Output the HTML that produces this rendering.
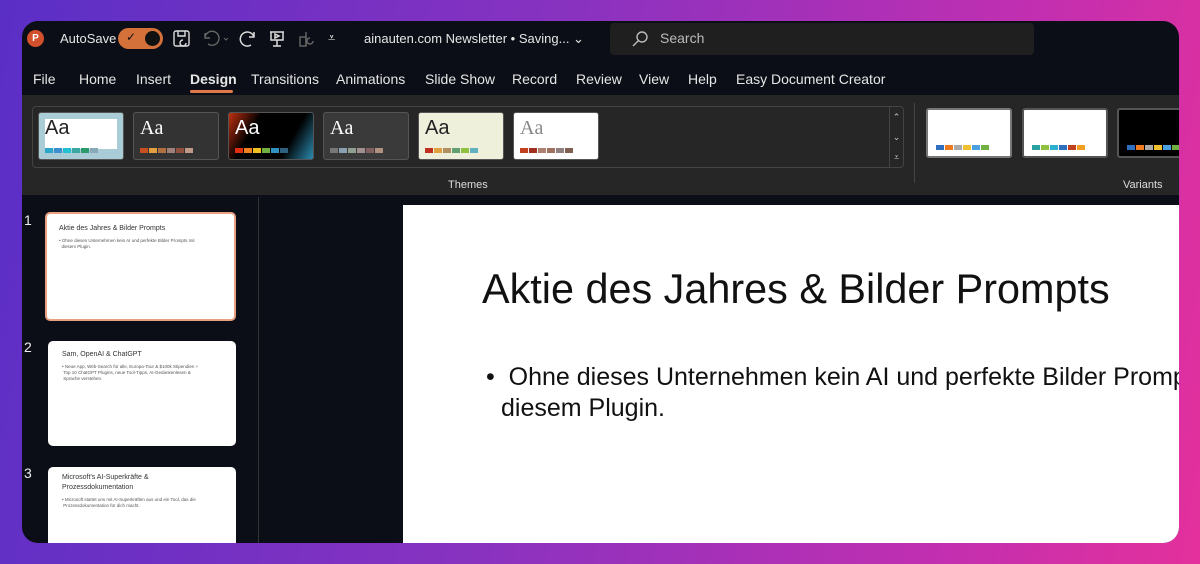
<!DOCTYPE html>
<html><head><meta charset="utf-8"><style>
*{margin:0;padding:0;box-sizing:border-box}
body{width:1200px;height:564px;overflow:hidden;font-family:"Liberation Sans",sans-serif;background:linear-gradient(100deg,#5a2fc6 0%,#8a32c0 45%,#c22fb0 80%,#e4309c 100%);position:relative}
.win{position:absolute;left:22px;top:21px;width:1157px;height:522px;border-radius:16px;overflow:hidden;background:#0b0e16}
.t{position:absolute;color:#e6e6e6;font-size:14px;white-space:nowrap}
.tab{position:absolute;top:50px;color:#e6e6e6;font-size:14px}
.ribbon{position:absolute;left:0;top:74px;width:1157px;height:100px;background:#262626}
.gal{position:absolute;left:10px;top:11px;width:872px;height:62px;border:1px solid #444;border-radius:4px;background:#262626}
.th{position:absolute;top:5px;width:86px;height:48px;border:1px solid #555;border-radius:3px;overflow:hidden}
.th span.aa{position:absolute;left:6px;top:4px;font-size:20px;color:#fff;font-family:"Liberation Serif",serif}
.sw{position:absolute;left:6px;bottom:6px;display:flex;gap:1px}
.sw i{display:block;width:8px;height:5px}
.var{position:absolute;top:13px;width:86px;height:50px;border:2px solid #555;border-radius:3px;background:#fff}
.thumb{position:absolute;left:26px;width:188px;background:#fff;border-radius:5px}
.num{position:absolute;left:2px;color:#eee;font-size:14px}
</style></head><body>
<div class="win">
 <div style="position:absolute;left:5px;top:9px;width:17px;height:17px;border-radius:50%;background:#d2502c;color:#fff;font-size:10px;font-weight:bold;text-align:center;line-height:17px">P</div>
 <div class="t" style="left:38px;top:10px;font-size:13px">AutoSave</div>
 <div style="position:absolute;left:96px;top:7px;width:45px;height:21px;border-radius:11px;background:#d4703a"><span style="position:absolute;left:8px;top:2px;color:#111;font-size:12px">✓</span><div style="position:absolute;right:3px;top:3px;width:15px;height:15px;border-radius:50%;background:#111"></div></div>
 <svg style="position:absolute;left:150px;top:8px" width="20" height="20" viewBox="0 0 20 20" fill="none" stroke="#ddd" stroke-width="1.4"><rect x="2" y="2" width="15" height="15" rx="2"/><path d="M6 2v5h7V2M11 11a3 3 0 1 0 3 3"/></svg>
 <svg style="position:absolute;left:180px;top:8px" width="30" height="20" viewBox="0 0 30 20" fill="none" stroke="#666" stroke-width="1.4"><path d="M3 4v5h5M3 9a7 7 0 1 1 3 6"/><path d="M22 9l2 2 2-2" stroke-width="1"/></svg>
 <svg style="position:absolute;left:216px;top:8px" width="20" height="20" viewBox="0 0 20 20" fill="none" stroke="#ddd" stroke-width="1.5"><path d="M16 3v5h-5M16 8a7 7 0 1 0-3 8"/></svg>
 <svg style="position:absolute;left:245px;top:8px" width="20" height="20" viewBox="0 0 20 20" fill="none" stroke="#ddd" stroke-width="1.5"><path d="M3 3h14M4 3v8h12V3M10 11v6M6 17h8M8 5l4 2-4 2z"/></svg>
 <svg style="position:absolute;left:275px;top:8px" width="20" height="20" viewBox="0 0 20 20" fill="none" stroke="#666" stroke-width="1.4"><rect x="3" y="8" width="6" height="9"/><path d="M9 3v14M13 9a3 3 0 1 0 3 3"/></svg>
 <div class="t" style="left:306px;top:9px;font-size:13px">⩡</div>
 <div class="t" style="left:342px;top:10px;font-size:13px">ainauten.com Newsletter • Saving... ⌄</div>
 <div style="position:absolute;left:588px;top:2px;width:424px;height:32px;background:#1f1f1f;border-radius:4px"></div>
 <svg style="position:absolute;left:609px;top:9px" width="18" height="18" viewBox="0 0 18 18" fill="none" stroke="#bbb" stroke-width="1.4"><circle cx="11" cy="7" r="5"/><path d="M7.5 10.5L2 16"/></svg>
 <div class="t" style="left:638px;top:9px;color:#bbb">Search</div>
 <div class="tab" style="left:11px">File</div>
 <div class="tab" style="left:57px">Home</div>
 <div class="tab" style="left:114px">Insert</div>
 <div class="tab" style="left:168px;font-weight:bold">Design</div>
 <div style="position:absolute;left:168px;top:69px;width:43px;height:3px;background:#e07a4a;border-radius:2px"></div>
 <div class="tab" style="left:229px">Transitions</div>
 <div class="tab" style="left:314px">Animations</div>
 <div class="tab" style="left:403px">Slide Show</div>
 <div class="tab" style="left:490px">Record</div>
 <div class="tab" style="left:554px">Review</div>
 <div class="tab" style="left:617px">View</div>
 <div class="tab" style="left:666px">Help</div>
 <div class="tab" style="left:714px">Easy Document Creator</div>
 <div class="ribbon">
  <div class="gal">
   <div class="th" style="left:5px;background:#a9ccd6"><div style="position:absolute;left:6px;top:6px;width:72px;height:30px;background:#fff"></div><span class="aa" style="color:#222;font-family:'Liberation Sans'">Aa</span><div class="sw"><i style="background:#2aa7c8"></i><i style="background:#3b8fd0"></i><i style="background:#22c0d0"></i><i style="background:#3aa8a0"></i><i style="background:#2a9a6a"></i><i style="background:#88aab8"></i></div></div>
   <div class="th" style="left:100px;background:#333"><span class="aa">Aa</span><div class="sw"><i style="background:#c8501e"></i><i style="background:#e0a040"></i><i style="background:#b07040"></i><i style="background:#a08078"></i><i style="background:#905040"></i><i style="background:#c09888"></i></div></div>
   <div class="th" style="left:195px;background:linear-gradient(120deg,#c03010,#000 30%,#000 70%,#2a8ab0)"><span class="aa" style="font-family:'Liberation Sans'">Aa</span><div class="sw"><i style="background:#e03010"></i><i style="background:#f08020"></i><i style="background:#f0c020"></i><i style="background:#70b040"></i><i style="background:#3090c0"></i><i style="background:#306080"></i></div></div>
   <div class="th" style="left:290px;background:#3a3a3a"><span class="aa">Aa</span><div class="sw"><i style="background:#777"></i><i style="background:#8aa0b0"></i><i style="background:#90a090"></i><i style="background:#a09090"></i><i style="background:#806060"></i><i style="background:#b09080"></i></div></div>
   <div class="th" style="left:385px;background:#eef0dc"><span class="aa" style="color:#222;font-family:'Liberation Sans'">Aa</span><div class="sw"><i style="background:#c03020"></i><i style="background:#e0a040"></i><i style="background:#b09060"></i><i style="background:#60a070"></i><i style="background:#90c040"></i><i style="background:#60b0c0"></i></div></div>
   <div class="th" style="left:480px;background:#fff"><span class="aa" style="color:#888">Aa</span><div class="sw"><i style="background:#c04020"></i><i style="background:#a03020"></i><i style="background:#b08070"></i><i style="background:#a07060"></i><i style="background:#908080"></i><i style="background:#806050"></i></div></div>
   <div style="position:absolute;right:0;top:0;width:14px;height:60px;border-left:1px solid #444;color:#ccc;font-size:9px;text-align:center;line-height:20px">⌃<br>⌄<br>⩡</div>
  </div>
  <div class="t" style="left:426px;top:84px;font-size:11px;color:#ddd">Themes</div>
  <div style="position:absolute;left:892px;top:8px;width:1px;height:80px;background:#444"></div>
  <div class="var" style="left:904px;border-color:#777"><div class="sw" style="left:8px"><i style="background:#2e6fc0"></i><i style="background:#f07a20"></i><i style="background:#aaa"></i><i style="background:#f0c030"></i><i style="background:#4aa0e0"></i><i style="background:#70b040"></i></div></div>
  <div class="var" style="left:1000px"><div class="sw" style="left:8px"><i style="background:#2aa0a0"></i><i style="background:#90c040"></i><i style="background:#30b0d0"></i><i style="background:#2e6fc0"></i><i style="background:#c04020"></i><i style="background:#f0a020"></i></div></div>
  <div class="var" style="left:1095px;background:#000"><div class="sw" style="left:8px"><i style="background:#2e6fc0"></i><i style="background:#f07a20"></i><i style="background:#aaa"></i><i style="background:#f0c030"></i><i style="background:#4aa0e0"></i><i style="background:#70b040"></i></div></div>
  <div class="t" style="left:1101px;top:84px;font-size:11px;color:#ddd">Variants</div>
 </div>
 <div style="position:absolute;left:236px;top:176px;width:1px;height:346px;background:#333"></div>
 <div class="num" style="top:191px">1</div>
 <div class="thumb" style="left:23px;top:191px;width:191px;height:109px;border:2px solid #e8a080;padding:11px 12px">
  <div style="font-size:7px;color:#333">Aktie des Jahres &amp; Bilder Prompts</div>
  <div style="font-size:4.5px;color:#555;margin-top:6px;line-height:6px">• Ohne dieses Unternehmen kein AI und perfekte Bilder Prompts mit<br>&nbsp; diesem Plugin.</div>
 </div>
 <div class="num" style="top:318px">2</div>
 <div class="thumb" style="top:320px;height:105px;padding:10px 14px">
  <div style="font-size:7px;color:#333">Sam, OpenAI &amp; ChatGPT</div>
  <div style="font-size:4.5px;color:#555;margin-top:6px;line-height:6px">• Neue App, Web-Search für alle, Europa-Tour &amp; $100k Stipendien +<br>&nbsp;Top 10 ChatGPT Plugins, neue Tool-Tipps, AI-Gedankenlesen &amp;<br>&nbsp;Sprache verstehen.</div>
 </div>
 <div class="num" style="top:444px">3</div>
 <div class="thumb" style="top:446px;height:90px;padding:6px 14px">
  <div style="font-size:7px;color:#333;line-height:10px">Microsoft's AI-Superkräfte &amp;<br>Prozessdokumentation</div>
  <div style="font-size:4.5px;color:#555;margin-top:4px;line-height:6px">• Microsoft stattet uns mit AI-Superkräften aus und ein Tool, das die<br>&nbsp;Prozessdokumentation für dich macht.</div>
 </div>
 <div style="position:absolute;left:381px;top:184px;width:780px;height:340px;background:#fff;overflow:hidden">
  <div style="position:absolute;left:79px;top:60px;font-size:42px;color:#111;white-space:nowrap;transform:scaleX(0.985);transform-origin:left">Aktie des Jahres &amp; Bilder Prompts</div>
  <div style="position:absolute;left:83px;top:157px;font-size:25px;color:#111;white-space:nowrap;line-height:31px">•&nbsp; Ohne dieses Unternehmen kein AI und perfekte Bilder Prompts mit<br><span style="padding-left:15px">diesem Plugin.</span></div>
 </div>
</div>
</body></html>
